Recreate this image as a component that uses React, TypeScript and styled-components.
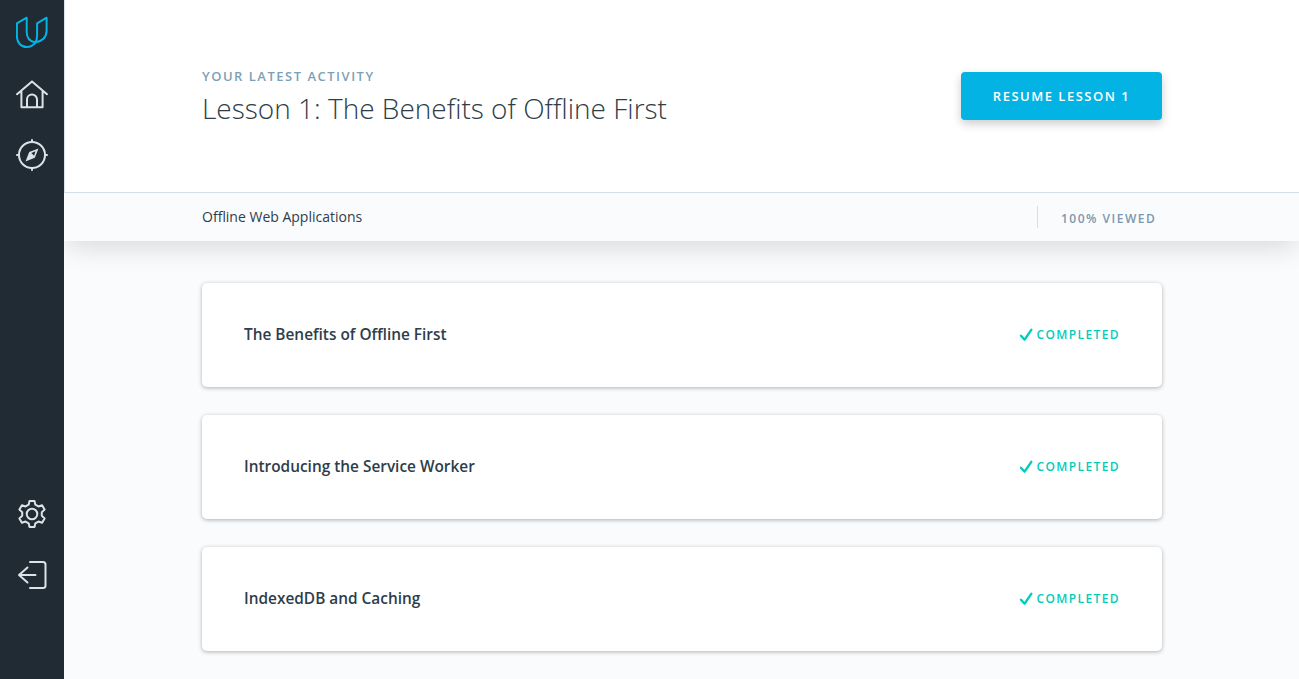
import React from "react";
import styled, { createGlobalStyle } from "styled-components";

const GlobalStyle = createGlobalStyle`
  * { box-sizing: border-box; }
  body { margin: 0; overflow: hidden; background: #fafbfd; font-family: "Open Sans", "Noto Sans", sans-serif; color: #2e3d49; }
  h1, h2, p { margin: 0; }
`;

const Page = styled.div`
  display: flex;
  height: 679px;
  overflow: hidden;
`;

const Sidebar = styled.nav`
  position: relative;
  z-index: 1;
  flex: 0 0 64px;
  display: flex;
  flex-direction: column;
  align-items: center;
  background: #212b33;
  padding: 16px 0 88px;
`;

const NavItem = styled.a<{ $gap?: number; $bottom?: boolean }>`
  display: block;
  width: 32px;
  height: 32px;
  margin-top: ${(p) => (p.$bottom ? "auto" : `${p.$gap ?? 0}px`)};
  svg { display: block; }
`;

const Main = styled.main`
  flex: 1;
  min-width: 0;
`;

const Header = styled.header`
  position: relative;
  box-shadow: 0 10px 24px -3px rgba(0, 0, 0, 0.13);
`;

const Container = styled.div`
  width: 960px;
  margin-left: 138px;
  display: flex;
  justify-content: space-between;
`;

const Hero = styled.section`
  height: 193px;
  background: #fff;
  border-bottom: 1px solid #d5dfe7;
  border-left: 1px solid #dbe2e8;
  padding-top: 68px;
  ${Container} { margin-left: 137px; }
`;

const Eyebrow = styled.p`
  font-size: 13px;
  line-height: 16px;
  font-weight: 600;
  letter-spacing: 1.5px;
  color: #7d9fb8;
`;

const Title = styled.h1`
  font-size: 28px;
  line-height: 48px;
  font-weight: 300;
`;

const ResumeButton = styled.button`
  width: 201px;
  height: 48px;
  margin-top: 4px;
  padding: 0;
  border: 0;
  border-radius: 4px;
  background: #02b3e4;
  color: #fff;
  font: 600 13px/48px "Open Sans", sans-serif;
  letter-spacing: 1.5px;
  box-shadow: 0 4px 10px rgba(0, 0, 0, 0.2);
`;

const SubBar = styled.section`
  height: 48px;
  background: #fafbfd;
  ${Container} { height: 48px; align-items: center; }
`;

const CourseName = styled.p`
  font-size: 14px;
  line-height: 24px;
`;

const Viewed = styled.p`
  width: 125px;
  height: 22px;
  padding-left: 23px;
  border-left: 1px solid #d5dfe7;
  font-size: 12px;
  line-height: 26px;
  font-weight: 600;
  letter-spacing: 1.5px;
  color: #7d97ad;
`;

const LessonList = styled.section`
  width: 960px;
  margin: 42px 0 0 138px;
  display: grid;
  gap: 28px;
`;

const LessonCard = styled.article`
  display: flex;
  align-items: center;
  justify-content: space-between;
  height: 104px;
  padding: 0 42px;
  border-radius: 5px;
  background: #fff;
  box-shadow: 0 1px 4px rgba(0, 0, 0, 0.3);
`;

const LessonTitle = styled.h2`
  font-size: 15.4px;
  line-height: 24px;
  font-weight: 600;
`;

const Status = styled.div`
  display: flex;
  align-items: center;
  gap: 3px;
  font-size: 12px;
  line-height: 16px;
  font-weight: 600;
  letter-spacing: 1.4px;
  color: #02ccba;
`;

const line = { fill: "none", stroke: "#dbe2e8", strokeWidth: 2, strokeLinecap: "round", strokeLinejoin: "round" } as const;

const Logo = () => (
  <svg width="32" height="32" viewBox="0 0 32 32" fill="none" stroke="#02b3e4" strokeWidth="2" strokeLinejoin="round">
    <path d="M.9 7.3 10.7 1.7V16C10.7 21.5 14 25.5 19.3 26.6C17 29.7 13.8 31 10.8 31C5 31 .9 26.5 .9 20.3Z" />
    <path d="M21.1 7.3 30.6 1.7V14.7C30.6 21.3 25.7 25.8 19.3 26.6C20.6 24.8 21.1 22.5 21.1 19.8Z" />
  </svg>
);

const Home = () => (
  <svg width="32" height="32" viewBox="0 0 32 32" {...line}>
    <path d="M1 15.2 16 2.4 31 15.2M5.4 12V28.2H26.6V12M11 28V20.5A5 5 0 0 1 21 20.5V28" />
  </svg>
);

const Compass = () => (
  <svg width="32" height="32" viewBox="0 0 32 32" {...line}>
    <circle cx="16" cy="16" r="13" />
    <path d="M16 1V3M16 29V31M1 16H3M29 16H31" />
    <path fillRule="evenodd" d="M22.5 9.5 13.2 13 9.5 22.5 18.8 18.8ZM19.5 12.3 15.3 13.9 18.1 16.7Z" fill="#dbe2e8" stroke="none" />
  </svg>
);

const gearPoints = [0, 60, 120, 180, 240, 300]
  .flatMap((deg) => {
    const a = (deg * Math.PI) / 180;
    return [[-3.3, -9.4], [-2.5, -13.1], [2.5, -13.1], [3.3, -9.4]].map(
      ([x, y]) => `${(16 + x * Math.cos(a) - y * Math.sin(a)).toFixed(2)},${(16 + x * Math.sin(a) + y * Math.cos(a)).toFixed(2)}`
    );
  })
  .join(" ");

const Gear = () => (
  <svg width="32" height="32" viewBox="0 0 32 32" {...line}>
    <polygon points={gearPoints} />
    <circle cx="16" cy="16" r="5.3" />
  </svg>
);

const Logout = () => (
  <svg width="32" height="32" viewBox="0 0 32 32" {...line}>
    <path d="M14 3H27Q29.5 3 29.5 5.5V26.5Q29.5 29 27 29H14M19.5 16H3M11.5 8.5 3 16 11.5 23.5" />
  </svg>
);

const Check = () => (
  <svg width="14" height="14" viewBox="0 0 14 14" fill="none" stroke="#02ccba" strokeWidth="2.4" strokeLinecap="round" strokeLinejoin="round">
    <path d="M2 7.7 5.6 11.7 12.3 1.8" />
  </svg>
);

const lessons = ["The Benefits of Offline First", "Introducing the Service Worker", "IndexedDB and Caching"];

export default function App() {
  return (
    <Page>
      <GlobalStyle />
      <Sidebar>
        <NavItem aria-label="Udacity"><Logo /></NavItem>
        <NavItem $gap={31} aria-label="Home"><Home /></NavItem>
        <NavItem $gap={28} aria-label="Catalog"><Compass /></NavItem>
        <NavItem $bottom aria-label="Settings"><Gear /></NavItem>
        <NavItem $gap={29} aria-label="Sign out"><Logout /></NavItem>
      </Sidebar>
      <Main>
        <Header>
          <Hero>
            <Container>
              <div>
                <Eyebrow>YOUR LATEST ACTIVITY</Eyebrow>
                <Title>Lesson 1: The Benefits of Offline First</Title>
              </div>
              <ResumeButton>RESUME LESSON 1</ResumeButton>
            </Container>
          </Hero>
          <SubBar>
            <Container>
              <CourseName>Offline Web Applications</CourseName>
              <Viewed>100% VIEWED</Viewed>
            </Container>
          </SubBar>
        </Header>
        <LessonList>
          {lessons.map((name) => (
            <LessonCard key={name}>
              <LessonTitle>{name}</LessonTitle>
              <Status><Check />COMPLETED</Status>
            </LessonCard>
          ))}
        </LessonList>
      </Main>
    </Page>
  );
}
